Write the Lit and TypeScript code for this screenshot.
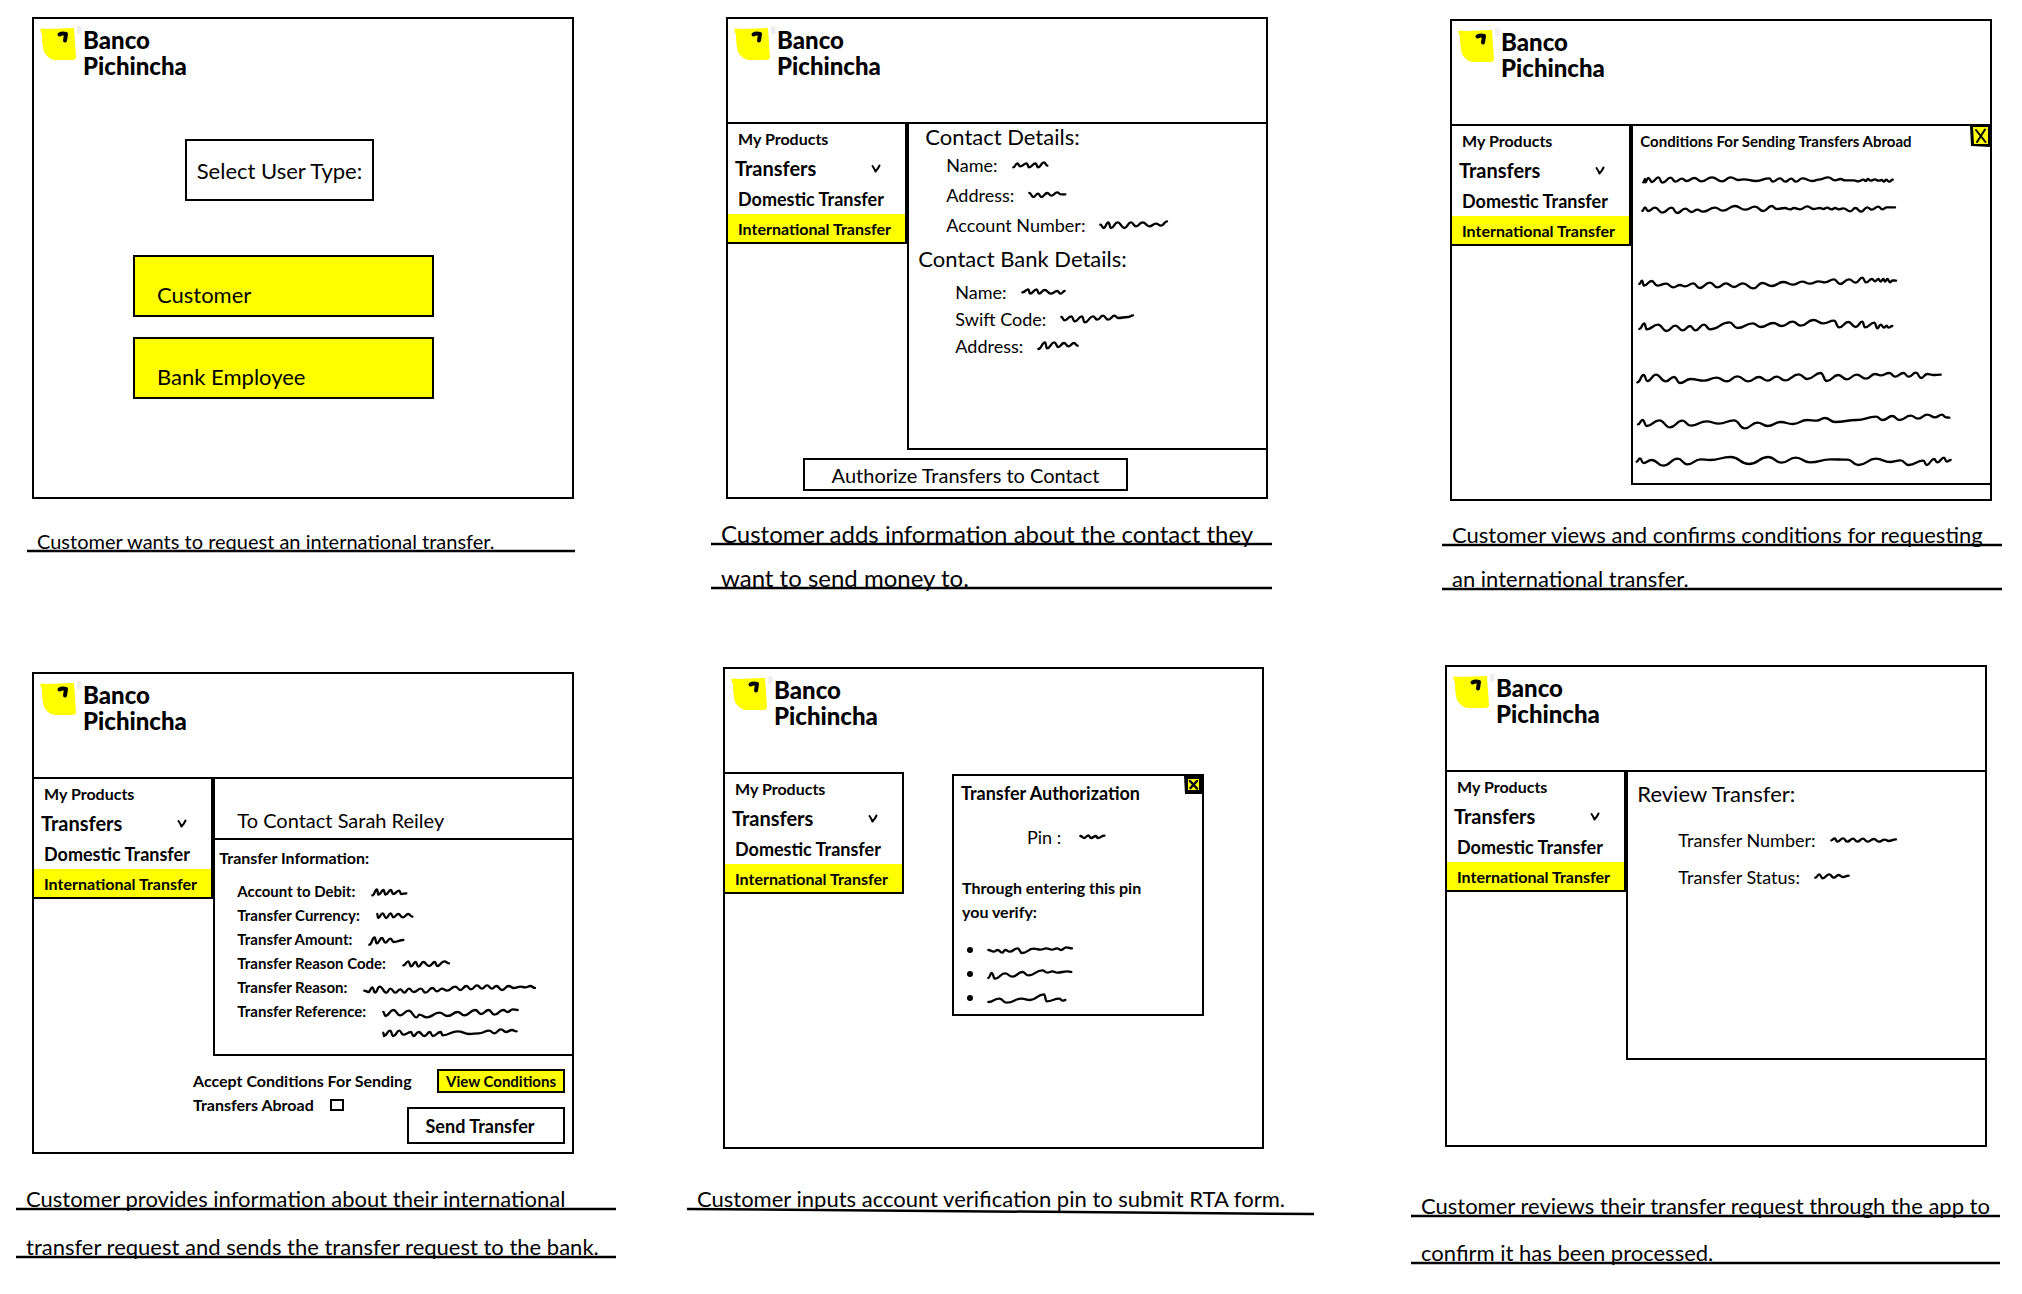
import { LitElement, html, svg, css, nothing } from "lit";
import { customElement, property } from "lit/decorators.js";

type Box = [number, number, number, number];

/* Pen strokes are plotted on a grid three times finer than a pixel. */
const GRID = 3;

function strokePath(points: string): string {
  const list = points.split(" ").map((p) => p.split(",").map(Number));
  let d = `M${list[0][0]} ${list[0][1]}`;
  for (let i = 1; i < list.length; i++) {
    const [x0, y0] = list[i - 1];
    const [x1, y1] = list[i];
    const mid = (x0 + x1) / 2;
    d += `C${mid} ${y0} ${mid} ${y1} ${x1} ${y1}`;
  }
  return d;
}

function boundsOf(points: string): Box {
  const list = points.split(" ").map((p) => p.split(",").map(Number));
  const xs = list.map((p) => p[0]);
  const ys = list.map((p) => p[1]);
  const x = Math.min(...xs) - 4;
  const y = Math.min(...ys) - 4;
  const w = Math.ceil((Math.max(...xs) + 4 - x) / GRID) * GRID;
  const h = Math.ceil((Math.max(...ys) + 4 - y) / GRID) * GRID;
  return [x, y, w, h];
}

function wave(points: string, box: Box = boundsOf(points)) {
  return html`<svg
    class="wave"
    aria-hidden="true"
    width=${box[2] / GRID}
    height=${box[3] / GRID}
    viewBox=${box.join(" ")}
  >${svg`<path d=${strokePath(points)} fill="none" stroke="#000" stroke-width="7" stroke-linecap="round" stroke-linejoin="round"></path>`}</svg>`;
}

const CONTACT = [
  { label: "Name:", value: "338,170 350,158 358,167 378,158 385,170 405,158 412,170 430,155 440,165" },
  { label: "Address:", value: "386,250 398,262 412,252 422,262 440,250 452,258 470,248 480,254 494,254" },
  { label: "Account Number:", value: "608,345 618,355 632,338 640,355 660,338 680,355 700,338 715,350 735,338 755,350 775,342 790,348 808,335" },
];

const BANK = [
  { label: "Name:", value: "365,552 383,543 388,556 408,543 415,556 432,545 450,556 470,548 480,556 492,548" },
  { label: "Swift Code:", value: "490,632 500,642 520,630 530,645 552,630 560,648 585,630 598,640 615,628 630,640 650,628 660,635 690,632 705,627" },
  { label: "Address:", value: "398,722 418,702 424,720 446,702 458,716 475,704 488,714 505,704 516,712" },
];

const TRANSFER = [
  { label: "Account to Debit:", value: "124,92 138,74 142,90 158,76 163,90 180,76 186,88 205,78 210,88 226,86" },
  { label: "Transfer Currency:", value: "102,152 104,164 118,150 128,164 142,150 150,162 165,152 178,162 195,152 207,160" },
  { label: "Transfer Amount:", value: "102,232 118,210 124,228 140,212 150,226 165,214 175,224 204,218" },
  { label: "Transfer Reason Code:", value: "155,300 170,288 178,303 192,290 200,304 215,290 232,302 250,290 256,302 278,288 292,294" },
  {
    label: "Transfer Reason:",
    value:
      "92,358 104,362 116,348 124,364 138,346 158,364 170,352 185,364 200,354 212,364 226,352 240,362 262,352 275,364 296,350 310,360 325,352 340,358 365,346 380,356 398,344 412,354 430,342 445,352 460,342 475,352 488,344 505,356 525,344 540,350 560,346 575,348 590,344 604,350",
  },
  {
    label: "Transfer Reference:",
    value:
      "132,430 138,442 162,424 182,440 208,426 232,446 240,438 262,446 300,432 325,442 355,430 375,440 408,424 425,436 448,424 465,438 492,424 505,430 520,422 535,424",
    more:
      "122,488 124,498 142,482 152,498 170,482 182,494 205,486 212,498 228,486 245,498 262,486 270,498 294,486 300,496 345,484 380,492 408,490 440,482 455,490 475,478 490,486 508,480 522,484",
  },
];

const REVIEW = [
  { label: "Transfer Number:", value: "0,8 10,2 18,12 35,2 48,12 65,3 78,12 95,3 108,12 128,4 142,12 160,6 172,10 194,5" },
  { label: "Transfer Status:", value: "0,12 12,2 22,14 42,2 55,12 70,4 82,10 100,6" },
];

const PIN = "418,212 430,218 442,210 450,218 465,212 470,218 490,211";

const PIN_TERMS = [
  "144,545 160,550 172,545 185,553 195,545 208,550 232,540 245,554 280,541 300,544 318,540 335,544 350,540 362,545 378,537 395,540",
  "148,620 158,605 168,622 198,606 220,616 250,602 268,612 310,597 325,604 340,600 355,604 385,600 397,602",
  "155,694 188,684 210,696 255,684 280,688 322,671 330,692 368,684 378,690 386,688",
];

const CONDITIONS: { box: Box; points: string }[] = [
  {
    box: [9, 165, 990, 60],
    points:
      "40,190 45,180 46,190 55,177 66,189 85,175 97,191 122,176 136,188 156,179 170,186 193,177 214,187 246,175 276,187 302,175 325,183 342,181 378,186 418,178 428,188 450,178 466,188 484,179 498,188 517,178 548,186 565,182 595,175 615,184 632,180 645,184 672,184 685,187 700,182 708,186 713,180 722,185 735,181 745,185 755,183 762,188 768,182 778,188 788,182",
  },
  {
    box: [9, 225, 990, 150],
    points:
      "37,276 45,265 54,276 75,266 97,281 125,266 141,282 166,269 184,279 202,272 218,278 255,266 278,275 315,261 345,272 375,263 400,276 425,261 440,270 465,267 480,271 492,267 510,271 532,262 550,270 570,267 580,270 592,266 604,271 616,267 625,271 640,268 661,277 676,267 693,278 712,265 725,272 745,263 757,271 770,265 795,265",
  },
  {
    box: [9, 375, 990, 180],
    points:
      "28,495 36,485 42,500 65,486 82,500 108,494 130,505 150,498 165,502 190,493 208,507 240,491 262,505 288,493 312,504 338,493 370,508 397,492 425,501 460,489 488,497 517,488 540,494 566,487 585,490 612,481 630,495 657,481 677,491 697,476 708,490 726,480 735,487 745,480 752,488 760,480 765,488 772,480 780,490 787,484 798,485",
  },
  {
    box: [9, 555, 990, 150],
    points:
      "28,630 43,613 50,631 84,617 110,636 136,620 158,634 180,621 196,634 222,617 240,631 298,610 322,627 368,613 392,624 430,612 455,621 488,608 512,620 550,603 580,613 612,605 627,625 655,609 677,624 697,608 705,625 733,611 742,628 752,617 762,626 770,620 775,626 787,621",
  },
  {
    box: [9, 705, 990, 135],
    points:
      "22,790 41,768 52,786 78,767 107,787 132,774 150,792 182,780 222,785 260,776 290,787 322,772 355,787 387,774 413,785 440,773 465,784 506,766 532,780 572,762 590,786 625,768 650,781 680,767 708,779 735,765 752,769 778,762 795,773 820,762 836,773 858,761 873,777 892,765 910,768 932,767",
  },
  {
    box: [9, 840, 990, 135],
    points:
      "24,916 38,903 50,921 88,904 120,925 157,905 182,920 230,907 266,914 312,904 344,928 382,911 413,921 452,909 488,915 532,903 560,905 585,897 615,909 680,903 738,893 758,903 787,891 808,903 842,890 864,899 892,887 915,895 936,887 948,895 958,896",
  },
  {
    box: [9, 975, 990, 90],
    points:
      "20,1028 30,1018 40,1032 65,1023 100,1040 143,1019 172,1036 212,1021 240,1023 302,1014 357,1035 415,1014 455,1031 497,1016 540,1030 602,1021 652,1022 685,1038 738,1019 780,1029 812,1024 836,1038 880,1025 890,1038 912,1020 922,1030 942,1016 950,1028 962,1023",
  },
];

const base = css`
  * {
    box-sizing: border-box;
    margin: 0;
    padding: 0;
  }
  ul {
    list-style: none;
  }
  button {
    font: inherit;
    color: inherit;
    background: #fff;
    border: 2px solid #000;
    border-radius: 0;
    cursor: pointer;
  }
  svg {
    display: block;
    flex: none;
  }
`;

@customElement("bank-brand")
export class BankBrand extends LitElement {
  static styles = [
    base,
    css`
      :host {
        display: block;
      }
      .brand {
        display: flex;
        align-items: flex-start;
        gap: 1px;
        min-height: 103px;
        padding: 6px 6px 0;
      }
      .name {
        padding-top: 2px;
        font-size: 24px;
        font-weight: 900;
        line-height: 26px;
      }
      .line {
        display: block;
      }
    `,
  ];

  render() {
    return html`
      <div class="brand">
        <svg width="42" height="36" viewBox="0 0 42 36" aria-hidden="true">
          <path d="M37 1Q40 0 42 3L41 9L37 9Z" fill="#f0edf0"></path>
          <path d="M0 4Q3 3 6 4L34 3L36 33Q35 35 32 35L15 35Q8 34 4 27Q2 20 2 10Z" fill="#ff0"></path>
          <path d="M19.500 9.500Q22 8 26 9L25 15.500" fill="none" stroke="#000" stroke-width="4" stroke-linecap="round" stroke-linejoin="round"></path>
        </svg>
        <p class="name"><span class="line">Banco</span><span class="line">Pichincha</span></p>
      </div>
    `;
  }
}

@customElement("bank-menu")
export class BankMenu extends LitElement {
  static styles = [
    base,
    css`
      :host {
        display: block;
        border: solid #000;
        border-width: 2px 2px 2px 0;
      }
      .item {
        display: flex;
        align-items: center;
        justify-content: space-between;
        height: 28px;
        padding-left: 10px;
        font-size: 16px;
        font-weight: 700;
        color: #000;
        text-decoration: none;
        white-space: nowrap;
      }
      .parent {
        height: 32px;
        padding: 0 24px 0 7px;
        font-size: 20px;
      }
      .domestic {
        height: 30px;
        font-size: 18px;
      }
      .current {
        background: #ff0;
      }
    `,
  ];

  render() {
    return html`
      <nav aria-label="Products">
        <ul>
          <li><a class="item" href="#products">My Products</a></li>
          <li>
            <a class="item parent" href="#transfers">
              Transfers
              <svg width="10" height="9" viewBox="0 0 10 9" aria-hidden="true">
                <path d="M1.500 2Q3 4 4.500 7.500Q7 5 8.500 1.500" fill="none" stroke="#000" stroke-width="2" stroke-linecap="round" stroke-linejoin="round"></path>
              </svg>
            </a>
          </li>
          <li><a class="item domestic" href="#domestic">Domestic Transfer</a></li>
          <li><a class="item current" href="#international" aria-current="page">International Transfer</a></li>
        </ul>
      </nav>
    `;
  }
}

@customElement("story-caption")
export class StoryCaption extends LitElement {
  @property({ attribute: false }) lines: string[] = [];
  @property({ type: Number }) drop = 0;

  static styles = [
    base,
    css`
      :host {
        display: block;
      }
      .line {
        display: block;
        line-height: 16px;
        padding: var(--lead, 24px) 0 0 10px;
        white-space: nowrap;
      }
      .rule {
        width: 100%;
      }
    `,
  ];

  render() {
    return html`<p>
      ${this.lines.map(
        (line) => html`<span class="line">${line}</span>
          <svg class="rule" height=${4 + this.drop} viewBox="0 0 100 ${4 + this.drop}" preserveAspectRatio="none" aria-hidden="true">
            <path d="M0 2L100 ${2 + this.drop}" stroke="#000" stroke-width="2.500" vector-effect="non-scaling-stroke"></path>
          </svg>`
      )}
    </p>`;
  }
}

@customElement("app-root")
export class AppRoot extends LitElement {
  static styles = [
    base,
    css`
      :host {
        display: block;
        font-family: Lato, "Liberation Sans", sans-serif;
        color: #000;
        background: #fff;
      }
      .board {
        display: grid;
        grid-template-columns: repeat(3, minmax(0, 1fr));
        row-gap: 74px;
        padding: 17px 0 20px;
      }
      .frame {
        display: flex;
        flex-direction: column;
        min-height: 482px;
        border: 2px solid #000;
      }
      .frame-1 {
        margin: 0 100px 0 32px;
      }
      .frame-2 {
        margin: 0 80px 0 52px;
      }
      .frame-3 {
        margin: 2px 30px 0 102px;
      }
      .frame-4 {
        margin: 7px 100px 0 32px;
      }
      .frame-5 {
        margin: 2px 84px 0 49px;
      }
      .frame-6 {
        margin: 0 35px 0 97px;
      }
      .note {
        font-size: 22px;
      }
      .note-1 {
        margin: 10px 99px 0 27px;
        font-size: 20px;
      }
      .note-2 {
        margin: 3px 76px 0 37px;
        font-size: 24px;
      }
      .note-3 {
        margin: 2px 20px 0 94px;
      }
      .note-4 {
        margin: 9px 58px 0 16px;
        --lead: 28px;
      }
      .note-5 {
        margin: 14px 34px 0 13px;
        --lead: 28px;
      }
      .note-6 {
        margin: 24px 22px 0 63px;
        --lead: 27px;
      }
      .split {
        display: grid;
        grid-template-columns: minmax(0, 1fr) minmax(0, 2fr);
        align-items: start;
      }
      .main {
        border: solid #000;
        border-width: 2px 0 2px 2px;
      }
      .main-contact {
        min-height: 328px;
      }
      .main-terms {
        min-height: 361px;
      }
      .main-review {
        min-height: 290px;
      }

      .user-type {
        display: flex;
        align-items: center;
        justify-content: center;
        min-height: 62px;
        margin: 17px 198px 54px 151px;
        border: 2px solid #000;
        font-size: 22px;
        font-weight: 400;
        white-space: nowrap;
      }
      .choices {
        display: flex;
        flex-direction: column;
        gap: 20px;
        padding: 0 138px 0 99px;
      }
      .choice {
        padding: 26px 22px 8px;
        background: #ff0;
        font-size: 22px;
        line-height: 24px;
        text-align: left;
      }

      .heading {
        font-weight: 400;
        font-size: 22px;
        line-height: 26px;
        padding-left: 16px;
      }
      .heading-bank {
        line-height: 38px;
        padding-left: 9px;
      }
      .heading-review {
        line-height: 44px;
        padding-left: 9px;
      }
      .heading-info {
        font-size: 16px;
        font-weight: 700;
        line-height: 36px;
        padding-left: 4px;
      }
      .field {
        display: flex;
        align-items: center;
        gap: 14px;
        height: 30px;
        font-size: 18px;
      }
      .fields {
        padding-left: 37px;
      }
      .fields-bank {
        padding-left: 46px;
      }
      .fields-bank .field {
        height: 27px;
      }
      .fields-review {
        padding: 5px 0 0 50px;
      }
      .fields-review .field {
        height: 37px;
      }
      .fields-info {
        padding: 3px 0 0 22px;
      }
      .fields-info .field {
        min-height: 24px;
        height: auto;
        align-items: flex-start;
        font-size: 15px;
        font-weight: 700;
        line-height: 24px;
        gap: 16px;
      }
      .fields-info .value {
        display: grid;
        gap: 9px;
        padding-top: 9px;
      }

      .authorize {
        margin: 8px 138px 0 75px;
        height: 33px;
        font-size: 20px;
      }
      .contact {
        min-height: 61px;
        padding: 26px 0 0 22px;
        border: solid #000;
        border-width: 2px 0 0 2px;
        font-size: 20px;
        font-weight: 400;
        line-height: 30px;
      }
      .info {
        min-height: 218px;
      }
      .consent {
        display: grid;
        padding: 13px 7px 0 159px;
      }
      .consent-row {
        display: flex;
        align-items: flex-start;
        justify-content: space-between;
        font-size: 16px;
        font-weight: 700;
        line-height: 24px;
      }
      .agree {
        display: flex;
        align-items: center;
        gap: 16px;
      }
      .tick {
        appearance: none;
        width: 14px;
        height: 12px;
        border: 2px solid #000;
      }
      .view {
        height: 24px;
        padding: 0 7px;
        line-height: 18px;
        font-size: 15px;
        background: #ff0;
      }
      .send {
        width: 158px;
        height: 37px;
        margin-top: 14px;
        padding-right: 12px;
        font-size: 18px;
      }

      .title-row {
        display: flex;
        align-items: flex-start;
        justify-content: space-between;
      }
      .title {
        padding-left: 7px;
        font-size: 15px;
        font-weight: 700;
        line-height: 30px;
      }
      .main-terms .title-row {
        min-height: 48px;
      }
      .close {
        display: block;
        flex: none;
        border: none;
        background: none;
      }

      .dialog {
        margin: 2px 58px 0 48px;
        min-height: 242px;
        border: 2px solid #000;
      }
      .dialog .title {
        font-size: 18px;
        line-height: 34px;
      }
      .pin {
        display: flex;
        align-items: center;
        gap: 18px;
        padding: 13px 0 0 73px;
        font-size: 18px;
        line-height: 28px;
      }
      .verify {
        padding: 25px 0 0 8px;
        font-size: 16px;
        font-weight: 700;
        line-height: 24px;
      }
      .verify-line {
        display: block;
      }
      .pins {
        display: grid;
        gap: 10px;
        padding: 19px 0 0 13px;
      }
      .pin-term {
        display: flex;
        align-items: center;
        gap: 14px;
        min-height: 14px;
      }
      .dot {
        width: 6px;
        height: 6px;
        border-radius: 50%;
        background: #000;
      }
    `,
  ];

  private fields(rows: { label: string; value: string; more?: string }[], kind: string) {
    return html`<dl class="fields ${kind}">
      ${rows.map(
        (row) => html`<div class="field">
          <dt>${row.label}</dt>
          <dd class="value">${wave(row.value)}${row.more ? wave(row.more) : nothing}</dd>
        </div>`
      )}
    </dl>`;
  }

  render() {
    return html`
      <main class="board">
        <section>
          <div class="frame frame-1">
            <bank-brand></bank-brand>
            <h2 class="user-type">Select User Type:</h2>
            <div class="choices">
              <button class="choice" type="button">Customer</button>
              <button class="choice" type="button">Bank Employee</button>
            </div>
          </div>
          <story-caption class="note note-1" .lines=${["Customer wants to request an international transfer."]}></story-caption>
        </section>

        <section>
          <div class="frame frame-2">
            <bank-brand></bank-brand>
            <div class="split">
              <bank-menu></bank-menu>
              <div class="main main-contact">
                <h2 class="heading">Contact Details:</h2>
                ${this.fields(CONTACT, "")}
                <h2 class="heading heading-bank">Contact Bank Details:</h2>
                ${this.fields(BANK, "fields-bank")}
              </div>
            </div>
            <button class="authorize" type="button">Authorize Transfers to Contact</button>
          </div>
          <story-caption
            class="note note-2"
            .lines=${["Customer adds information about the contact they", "want to send money to."]}
          ></story-caption>
        </section>

        <section>
          <div class="frame frame-3">
            <bank-brand></bank-brand>
            <div class="split">
              <bank-menu></bank-menu>
              <div class="main main-terms">
                <div class="title-row">
                  <h2 class="title">Conditions For Sending Transfers Abroad</h2>
                  <button class="close" type="button" aria-label="Close">
                    <svg width="20" height="21" viewBox="0 0 20 21" aria-hidden="true">
                      <path d="M0 0H20V21L1 20Z" fill="#000"></path>
                      <path d="M3 1H18V18H4Z" fill="#ff0"></path>
                      <path d="M6 4L15.500 16M15 3.500L7 16" fill="none" stroke="#000" stroke-width="2" stroke-linecap="round"></path>
                    </svg>
                  </button>
                </div>
                ${CONDITIONS.map((c) => wave(c.points, c.box))}
              </div>
            </div>
          </div>
          <story-caption
            class="note note-3"
            .lines=${["Customer views and confirms conditions for requesting", "an international transfer."]}
          ></story-caption>
        </section>

        <section>
          <div class="frame frame-4">
            <bank-brand></bank-brand>
            <div class="split">
              <bank-menu></bank-menu>
              <div>
                <h2 class="contact">To Contact Sarah Reiley</h2>
                <div class="main info">
                  <h3 class="heading heading-info">Transfer Information:</h3>
                  ${this.fields(TRANSFER, "fields-info")}
                </div>
              </div>
            </div>
            <div class="consent">
              <div class="consent-row">
                <label for="agree">Accept Conditions For Sending</label>
                <button class="view" type="button">View Conditions</button>
              </div>
              <div class="consent-row">
                <span class="agree">
                  <label for="agree">Transfers Abroad</label>
                  <input class="tick" id="agree" type="checkbox" />
                </span>
                <button class="send" type="button">Send Transfer</button>
              </div>
            </div>
          </div>
          <story-caption
            class="note note-4"
            .lines=${[
              "Customer provides information about their international",
              "transfer request and sends the transfer request to the bank.",
            ]}
          ></story-caption>
        </section>

        <section>
          <div class="frame frame-5">
            <bank-brand></bank-brand>
            <div class="split">
              <bank-menu></bank-menu>
              <div class="dialog" role="dialog" aria-labelledby="auth-title">
                <div class="title-row">
                  <h2 class="title" id="auth-title">Transfer Authorization</h2>
                  <button class="close" type="button" aria-label="Close">
                    <svg width="18" height="18" viewBox="0 0 18 18" aria-hidden="true">
                      <path d="M0 0H18V18H1Z" fill="#000"></path>
                      <path d="M4 3H15V14H4Z" fill="#ff0"></path>
                      <path d="M6 5L13 12.500M13 5L6.500 12" fill="none" stroke="#000" stroke-width="2.500" stroke-linecap="round"></path>
                    </svg>
                  </button>
                </div>
                <p class="pin"><span>Pin :</span>${wave(PIN)}</p>
                <p class="verify">
                  <span class="verify-line">Through entering this pin</span>
                  <span class="verify-line">you verify:</span>
                </p>
                <ul class="pins">
                  ${PIN_TERMS.map((t) => html`<li class="pin-term"><span class="dot"></span>${wave(t)}</li>`)}
                </ul>
              </div>
            </div>
          </div>
          <story-caption
            class="note note-5"
            .drop=${5}
            .lines=${["Customer inputs account verification pin to submit RTA form."]}
          ></story-caption>
        </section>

        <section>
          <div class="frame frame-6">
            <bank-brand></bank-brand>
            <div class="split">
              <bank-menu></bank-menu>
              <div class="main main-review">
                <h2 class="heading heading-review">Review Transfer:</h2>
                ${this.fields(REVIEW, "fields-review")}
              </div>
            </div>
          </div>
          <story-caption
            class="note note-6"
            .lines=${["Customer reviews their transfer request through the app to", "confirm it has been processed."]}
          ></story-caption>
        </section>
      </main>
    `;
  }
}
